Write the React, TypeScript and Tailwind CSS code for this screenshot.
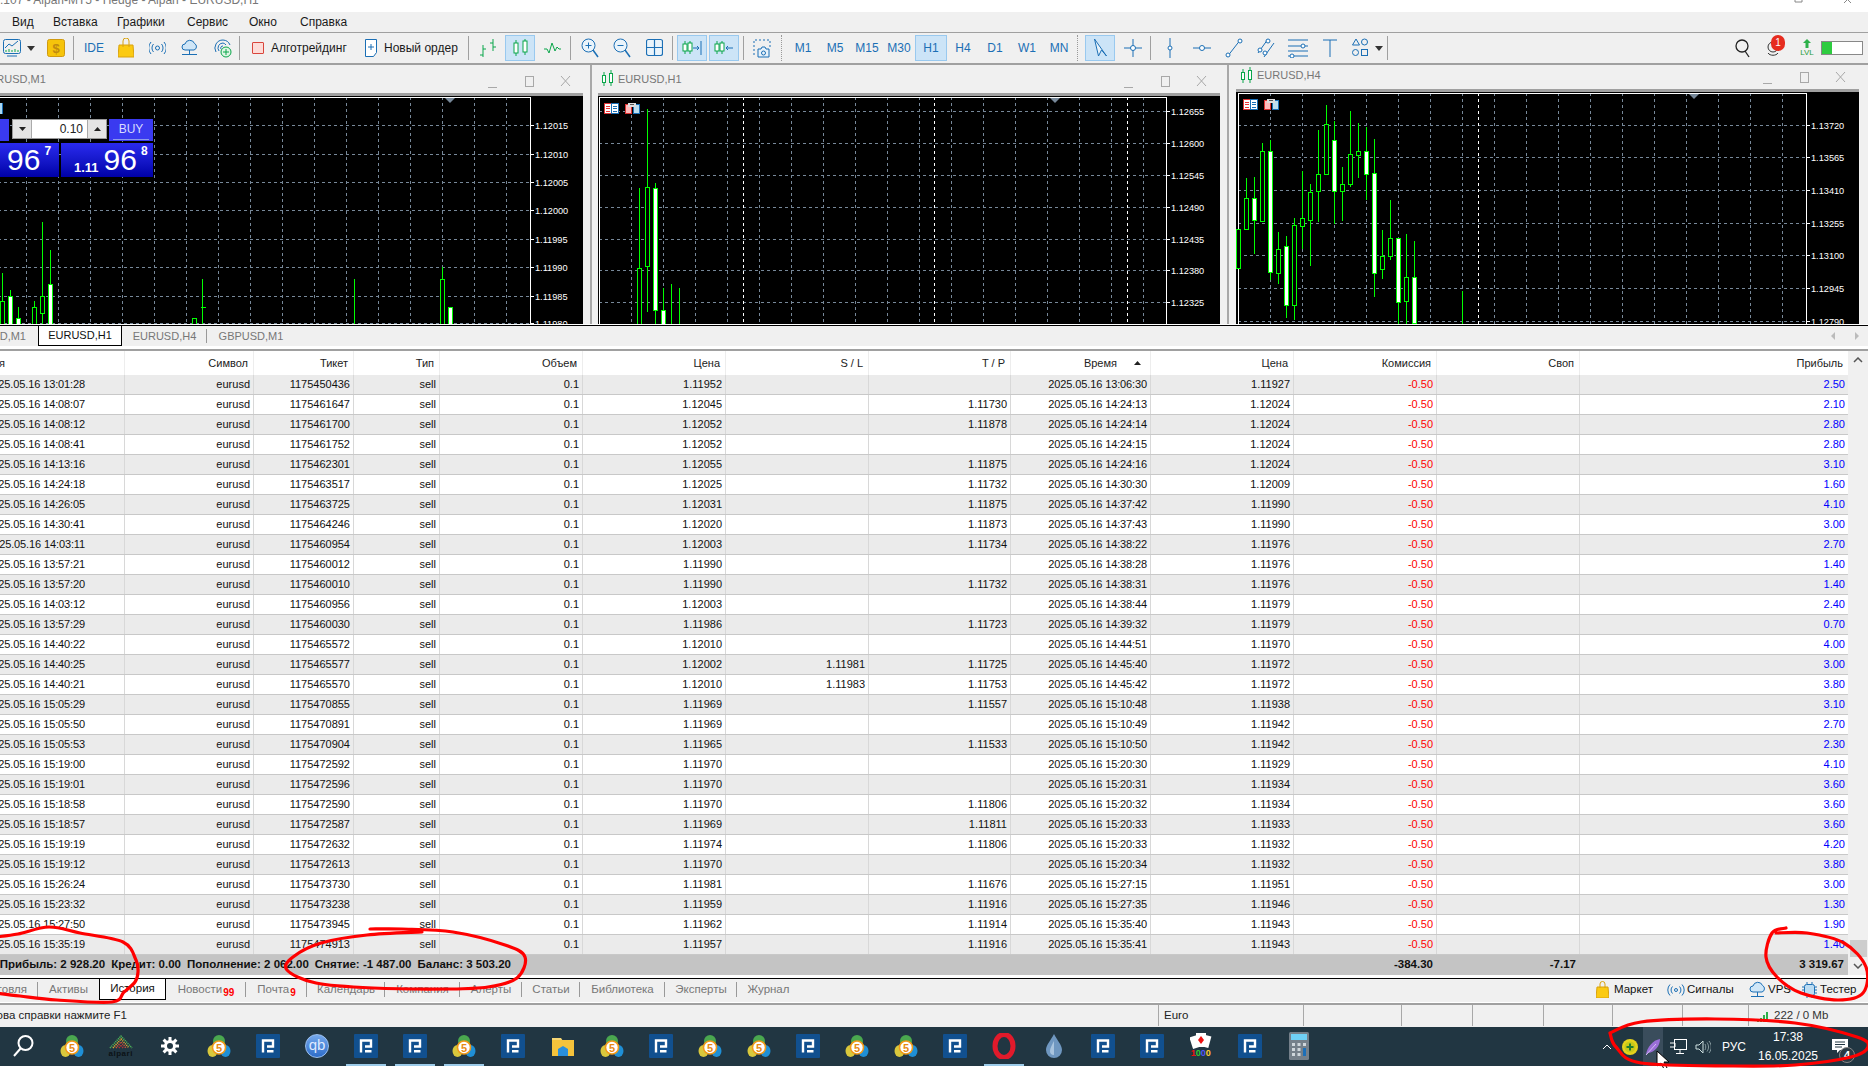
import React from "react";

const BLUE = "#1b6fb5";
const GREEN = "#0aa64a";

type Row = [string, string, string, string, string, string, string, string];
const rows: Row[] = [
  ["13:01:28","1175450436","1.11952","","","13:06:30","1.11927","2.50"],
  ["14:08:07","1175461647","1.12045","","1.11730","14:24:13","1.12024","2.10"],
  ["14:08:12","1175461700","1.12052","","1.11878","14:24:14","1.12024","2.80"],
  ["14:08:41","1175461752","1.12052","","","14:24:15","1.12024","2.80"],
  ["14:13:16","1175462301","1.12055","","1.11875","14:24:16","1.12024","3.10"],
  ["14:24:18","1175463517","1.12025","","1.11732","14:30:30","1.12009","1.60"],
  ["14:26:05","1175463725","1.12031","","1.11875","14:37:42","1.11990","4.10"],
  ["14:30:41","1175464246","1.12020","","1.11873","14:37:43","1.11990","3.00"],
  ["14:03:11","1175460954","1.12003","","1.11734","14:38:22","1.11976","2.70"],
  ["13:57:21","1175460012","1.11990","","","14:38:28","1.11976","1.40"],
  ["13:57:20","1175460010","1.11990","","1.11732","14:38:31","1.11976","1.40"],
  ["14:03:12","1175460956","1.12003","","","14:38:44","1.11979","2.40"],
  ["13:57:29","1175460030","1.11986","","1.11723","14:39:32","1.11979","0.70"],
  ["14:40:22","1175465572","1.12010","","","14:44:51","1.11970","4.00"],
  ["14:40:25","1175465577","1.12002","1.11981","1.11725","14:45:40","1.11972","3.00"],
  ["14:40:21","1175465570","1.12010","1.11983","1.11753","14:45:42","1.11972","3.80"],
  ["15:05:29","1175470855","1.11969","","1.11557","15:10:48","1.11938","3.10"],
  ["15:05:50","1175470891","1.11969","","","15:10:49","1.11942","2.70"],
  ["15:05:53","1175470904","1.11965","","1.11533","15:10:50","1.11942","2.30"],
  ["15:19:00","1175472592","1.11970","","","15:20:30","1.11929","4.10"],
  ["15:19:01","1175472596","1.11970","","","15:20:31","1.11934","3.60"],
  ["15:18:58","1175472590","1.11970","","1.11806","15:20:32","1.11934","3.60"],
  ["15:18:57","1175472587","1.11969","","1.11811","15:20:33","1.11933","3.60"],
  ["15:19:19","1175472632","1.11974","","1.11806","15:20:33","1.11932","4.20"],
  ["15:19:12","1175472613","1.11970","","","15:20:34","1.11932","3.80"],
  ["15:26:24","1175473730","1.11981","","1.11676","15:27:15","1.11951","3.00"],
  ["15:23:32","1175473238","1.11959","","1.11916","15:27:35","1.11946","1.30"],
  ["15:27:50","1175473945","1.11962","","1.11914","15:35:40","1.11943","1.90"],
  ["15:35:19","1175474913","1.11957","","1.11916","15:35:41","1.11943","1.40"],
];

const COLS = "grid grid-cols-[125px_129px_100px_86px_143px_143px_143px_142px_140px_143px_143px_143px_268px]";

// candle: [x, wickTop, wickBottom, bodyTop, bodyBottom, filled] in 3x crop coordinates
type C = [number, number, number, number?, number?, boolean?];
const c3: C[] = [
  [7,412,530,412,530,false],[31,258,412,320,412,false],[55,255,485,320,385,true],[79,153,388,178,388,false],
  [103,145,565,178,540,true],[127,420,575,472,545,false],[151,432,678,463,640,true],[175,378,684,400,640,false],
  [199,238,472,380,403,false],[223,276,522,300,383,false],[247,113,390,247,298,false],[271,40,247,97,247,false],
  [295,88,395,145,298,true],[319,225,387,277,298,false],[343,57,285,187,277,false],[367,93,258,178,190,false],
  [391,106,323,178,247,true],[415,141,614,244,544,true],[439,414,561,493,533,false],[463,324,503,439,494,false],
  [487,438,695,439,631,true],[511,427,695,556,628,false],[535,447,695,556,695,true],[679,598,695],
];
const c2: C[] = [
  [130,282,692,523,700,false],[154,45,654,280,517,false],[178,267,692,283,650,true],
  [202,583,692,650,700,true],[226,570,692],[250,582,692],
];
const c1: C[] = [
  [7,538,692,622,700,false],[31,588,692,607,700,true],[55,640,692,673,700,true],[103,622,692,640,700,false],
  [127,384,692,607,658,false],[151,468,692,572,700,true],[583,673,692,673,700,false],[607,555,692],
  [1063,555,692],[1327,520,692,556,700,false],[1351,640,692,640,700,true],
];

function Candles({ data, ox, oy }: { data: C[]; ox: number; oy: number }) {
  return (
    <g shapeRendering="crispEdges">
      {data.map(([x, a, b, t, u, f], i) => {
        const cx = Math.floor(x / 3 + ox) + 0.5;
        return (
          <g key={i}>
            <line x1={cx} x2={cx} y1={a / 3 + oy} y2={b / 3 + oy} stroke="#00ff00" />
            {t !== undefined && u !== undefined && (
              <rect x={cx - 2} y={Math.floor(t / 3 + oy) + 0.5} width={4} height={Math.round((u - t) / 3)} fill={f ? "#fff" : "#000"} stroke="#00ff00" />
            )}
            {x === 607 && <line x1={cx - 2} x2={cx + 3} y1={Math.floor(640 / 3 + oy) + 0.5} y2={Math.floor(640 / 3 + oy) + 0.5} stroke="#00ff00" />}
          </g>
        );
      })}
    </g>
  );
}

function CornerIcons({ x, y }: { x: number; y: number }) {
  return (
    <g transform={`translate(${x} ${y})`} shapeRendering="crispEdges">
      <rect x="0.5" y="0.5" width="14" height="10" fill="#fff" stroke="#d33" />
      <rect x="7.5" y="0.5" width="7" height="10" fill="#fff" stroke="#1b6fb5" />
      <path d="M2 3h4M2 5.5h4M2 8h4" stroke="#e33" />
      <path d="M9 3h4M9 5.5h4M9 8h4" stroke="#1b6fb5" />
      <rect x="21.5" y="1.5" width="6" height="9" fill="#fbb" stroke="#d33" />
      <rect x="29.5" y="1.5" width="6" height="9" fill="#bde" stroke="#1b6fb5" />
      <rect x="24" y="0" width="8" height="4" fill="#ddd" />
      <rect x="26" y="1" width="4" height="1" fill="#555" />
    </g>
  );
}

function Chart({ w, h, plotL, plotR, plotT, hs, labels, vStart, whites, data, ox, oy, mark, corner }: {
  w: number; h: number; plotL: number; plotR: number; plotT: number; hs: number[]; labels: string[]; vStart: number;
  whites: number[]; data: C[]; ox: number; oy: number; mark: number; corner?: [number, number];
}) {
  const vs: number[] = [];
  for (let x = vStart; x < plotR; x += 32) vs.push(x);
  return (
    <svg width={w} height={h} className="block">
      <rect width={w} height={h} fill="#000" />
      <g shapeRendering="crispEdges">
        {hs.map((y) => (
          <line key={y} x1={plotL} x2={plotR} y1={Math.floor(y) + 0.5} y2={Math.floor(y) + 0.5} stroke="#778899" strokeDasharray="3 3" />
        ))}
        {vs.map((x) => (
          <line key={x} x1={Math.floor(x) + 0.5} x2={Math.floor(x) + 0.5} y1={plotT} y2={h} stroke="#778899" strokeDasharray="3 3" />
        ))}
        {whites.map((x) => (
          <line key={x} x1={Math.floor(x) + 0.5} x2={Math.floor(x) + 0.5} y1={plotT} y2={h} stroke="#fff" strokeDasharray="3 3" />
        ))}
        <line x1={plotL} x2={plotR} y1={plotT + 0.5} y2={plotT + 0.5} stroke="#fff" />
        <line x1={plotL + 0.5} x2={plotL + 0.5} y1={plotT} y2={h} stroke="#fff" />
        <line x1={plotR + 0.5} x2={plotR + 0.5} y1={plotT} y2={h} stroke="#fff" />
        {hs.map((y) => (
          <line key={y} x1={plotR} x2={plotR + 4} y1={Math.floor(y) + 0.5} y2={Math.floor(y) + 0.5} stroke="#fff" />
        ))}
      </g>
      <Candles data={data} ox={ox} oy={oy} />
      <polygon points={`${mark - 5},${plotT + 1} ${mark + 5},${plotT + 1} ${mark},${plotT + 6}`} fill="#778899" />
      {corner && <CornerIcons x={corner[0]} y={corner[1]} />}
      {labels.map((l, i) => (
        <text key={l} x={plotR + 5} y={hs[i] + 3.5} fill="#fff" fontSize="9.2" fontFamily="Liberation Sans">{l}</text>
      ))}
    </svg>
  );
}

function WinCtl({ cls }: { cls: string }) {
  return (
    <svg width="83" height="16" viewBox="0 0 83 16" fill="none" stroke="#a8a8a8" className={`shrink-0 ${cls}`}>
      <path d="M0 14.5h9" />
      <rect x="37.5" y="3.5" width="8" height="10" />
      <path d="M73 3l9 10M82 3l-9 10" />
    </svg>
  );
}

function CandleMini() {
  return (
    <svg width="13" height="20" viewBox="0 0 13 20" fill="none" stroke="#0aa64a" className="shrink-0 block">
      <path d="M3 3v14M10 1v16" />
      <rect x="1.5" y="6.5" width="3" height="7" fill="#fff" />
      <rect x="8.5" y="4.5" width="3" height="9" fill="#fff" />
    </svg>
  );
}

function Sep() { return <div className="w-px h-[24px] bg-[#a0a0a0] shrink-0" />; }

function Ic({ w, h = 20, cls, vb, children }: { w: number; h?: number; cls: string; vb?: string; children: React.ReactNode }) {
  return (
    <svg width={w} height={h} viewBox={vb ?? `0 0 ${w} ${h}`} fill="none" className={`shrink-0 ${cls}`}>
      {children}
    </svg>
  );
}

function TfCell({ t, active }: { t: string; active?: boolean }) {
  return (
    <div className={`w-[32px] h-[26px] shrink-0 flex items-center justify-center text-[12px] text-[#1b6fb5] ${active ? "bg-[#cce4f7] shadow-[inset_0_0_0_1px_#99c9ef]" : ""}`}>{t}</div>
  );
}

function ToolCell({ cls, active, children }: { cls?: string; active?: boolean; children: React.ReactNode }) {
  return (
    <div className={`h-[26px] shrink-0 flex items-center justify-center ${active ? "bg-[#cce4f7] shadow-[inset_0_0_0_1px_#99c9ef]" : ""} ${cls ?? "w-[32px]"}`}>{children}</div>
  );
}

function Toolbar() {
  return (
    <div className="h-[30px] bg-[#f0f0f0] flex items-center overflow-hidden shrink-0 text-[12px] text-[#1a1a1a]">
      <Ic w={20} cls="ml-[2px]"><path d="M1.5 3.5a2 2 0 0 1 2-2h13a2 2 0 0 1 2 2v10a2 2 0 0 1-2 2h-13a2 2 0 0 1-2-2z" stroke={BLUE} /><path d="M3 10l4-4 3 2 6-5" stroke={BLUE} /><path d="M4 14v-2M7 14v-3M10 14v-2M13 14v-3M16 14v-2" stroke={GREEN} /><path d="M5 18h10" stroke={BLUE} /></Ic>
      <Ic w={8} h={5} cls="ml-[5px]"><path d="M0 0h8L4 5z" fill="#333" /></Ic>
      <Ic w={18} cls="ml-[12px]"><rect x=".5" y="1.5" width="17" height="17" rx="2" fill="#f6c40b" stroke="#d09a10" /><text x="9" y="15" textAnchor="middle" fontSize="13" fontWeight="700" fill="#c08a10">$</text></Ic>
      <div className="ml-[8px]"><Sep /></div>
      <div className="ml-[10px] w-[18px] text-[#1b6fb5] text-[12px] shrink-0">IDE</div>
      <Ic w={16} h={20} cls="ml-[16px]"><path d="M1 7h14l1 12H0z" fill="#fbca12" stroke="#d9a20e" /><path d="M5 9V3a3 3 0 0 1 6 0v6" stroke="#d9a20e" /></Ic>
      <Ic w={17} h={20} cls="ml-[15px]"><circle cx="8.5" cy="10" r="2" stroke={BLUE} /><path d="M4.5 6a6 6 0 0 0 0 8M12.5 6a6 6 0 0 1 0 8M2 4a9 9 0 0 0 0 12M15 4a9 9 0 0 1 0 12" stroke={BLUE} /></Ic>
      <Ic w={17} h={20} cls="ml-[15px]"><path d="M4 12a3 3 0 0 1 0-6 5 5 0 0 1 9.5-.5A3.5 3.5 0 0 1 13 12z" fill="#cfe6f7" stroke={BLUE} /><path d="M8.5 12v4M1 16.5h15" stroke={BLUE} /></Ic>
      <Ic w={19} h={20} cls="ml-[15px]"><path d="M10 2a8 8 0 0 0-7 12M10 5a5 5 0 0 0-4 8M10 8a2 2 0 0 0-2 3M10 2a8 8 0 0 1 7 5M10 5a5 5 0 0 1 3 2" stroke={BLUE} /><circle cx="13" cy="14" r="5" fill="#dff5e4" stroke={GREEN} /><path d="M13 11v6M10 14h6" stroke={GREEN} /></Ic>
      <div className="ml-[7px]"><Sep /></div>
      <div className="ml-[12px] w-[12px] h-[12px] shrink-0 border border-[#d9453c] bg-[#fddcd8] rounded-[1px]" />
      <div className="ml-[7px] w-[77px] shrink-0 whitespace-nowrap">Алготрейдинг</div>
      <Ic w={14} h={20} cls="ml-[16px]"><path d="M1.5 1.5h11v13l-3 4h-8z" fill="#fff" stroke={BLUE} /><path d="M7 6v6M4 9h6" stroke={BLUE} /></Ic>
      <div className="ml-[6px] w-[74px] shrink-0 whitespace-nowrap">Новый ордер</div>
      <div className="ml-[10px]"><Sep /></div>
      <Ic w={19} cls="ml-[10px]"><path d="M4 7v12M1 17h3M4 11h3M14 1v12M11 5h3M14 9h3" stroke={GREEN} /></Ic>
      <ToolCell cls="ml-[7px] w-[30px]" active><Ic w={15} cls=""><path d="M3 2v16M12 1v16" stroke={GREEN} /><rect x="1" y="5" width="4" height="10" fill="#fff" stroke={GREEN} /><rect x="10" y="3" width="4" height="11" fill="#fff" stroke={GREEN} /></Ic></ToolCell>
      <Ic w={17} cls="ml-[9px]"><path d="M0 11h3l2 4 3-10 3 8 2-4 2 2h2" stroke={GREEN} /></Ic>
      <div className="ml-[9px]"><Sep /></div>
      <Ic w={18} cls="ml-[10px]"><circle cx="7.5" cy="7.5" r="6.5" fill="#eaf4fb" stroke={BLUE} /><path d="M12 12l5 7" stroke={BLUE} strokeWidth="1.5" /><path d="M4.5 7.5h6M7.5 4.5v6" stroke={BLUE} /></Ic>
      <Ic w={18} cls="ml-[14px]"><circle cx="7.5" cy="7.5" r="6.5" fill="#eaf4fb" stroke={BLUE} /><path d="M12 12l5 7" stroke={BLUE} strokeWidth="1.5" /><path d="M4.5 7.5h6" stroke={BLUE} /></Ic>
      <Ic w={17} cls="ml-[15px]"><rect x=".5" y="1.5" width="16" height="16" rx="2" fill="#eaf4fb" stroke={BLUE} strokeWidth="1.2" /><path d="M8.5 1.5v16M.5 9.5h16" stroke={BLUE} strokeWidth="1.2" /></Ic>
      <div className="ml-[9px]"><Sep /></div>
      <ToolCell cls="ml-[4px] w-[30px]" active><Ic w={20} cls=""><path d="M3 3v13M8 3v13" stroke={GREEN} /><rect x="1" y="6" width="4" height="7" fill="#fff" stroke={GREEN} /><rect x="6" y="5" width="4" height="8" fill="#fff" stroke={GREEN} /><path d="M11 10h6M15 8l2 2-2 2M19 3v14" stroke={BLUE} /></Ic></ToolCell>
      <ToolCell cls="ml-[2px] w-[30px]" active><Ic w={20} cls=""><path d="M3 3v13M8 3v13" stroke={GREEN} /><rect x="1" y="6" width="4" height="7" fill="#fff" stroke={GREEN} /><rect x="6" y="5" width="4" height="8" fill="#fff" stroke={GREEN} /><path d="M12 10h7M14 8l-2 2 2 2" stroke={BLUE} /></Ic></ToolCell>
      <div className="ml-[4px]"><Sep /></div>
      <Ic w={20} cls="ml-[8px]"><path d="M2 17V2h16v7" stroke={BLUE} strokeDasharray="2 2" /><path d="M6 19v-8h3l1-2h3l1 2h3v8z" fill="#e8f2fa" stroke={BLUE} /><circle cx="11.5" cy="15" r="2" stroke={BLUE} /></Ic>
      <div className="ml-[9px] w-[2px] h-[26px] border-l border-dotted border-[#999] shrink-0" />
      <div className="ml-[4px] flex shrink-0">
        {["M1","M5","M15","M30"].map((t) => <TfCell key={t} t={t} />)}
        <TfCell t="H1" active />
        {["H4","D1","W1","MN"].map((t) => <TfCell key={t} t={t} />)}
      </div>
      <div className="ml-[2px] w-[2px] h-[26px] border-l border-dotted border-[#999] shrink-0" />
      <ToolCell cls="ml-[6px] w-[30px]" active><Ic w={14} cls=""><path d="M1.5 1l4 17 3-6 5 6z" fill="#eaf4fb" stroke={BLUE} /></Ic></ToolCell>
      <ToolCell cls="ml-[2px] w-[32px]"><Ic w={18} cls=""><path d="M9 1v18M0 10h18" stroke={BLUE} /><circle cx="9" cy="10" r="2.5" fill="#fff" stroke={BLUE} /></Ic></ToolCell>
      <div className="ml-px"><Sep /></div>
      <ToolCell cls="ml-[3px] w-[32px]"><Ic w={6} cls=""><path d="M3 0v20" stroke={BLUE} /><circle cx="3" cy="10" r="2" fill="#fff" stroke={BLUE} /></Ic></ToolCell>
      <ToolCell><Ic w={18} cls=""><path d="M0 10h18" stroke={BLUE} /><circle cx="9" cy="10" r="2.5" fill="#fff" stroke={BLUE} /></Ic></ToolCell>
      <ToolCell><Ic w={18} cls=""><path d="M2 19L16 1" stroke={BLUE} /><circle cx="3" cy="17" r="2" fill="#fff" stroke={BLUE} /><circle cx="15" cy="3" r="2" fill="#fff" stroke={BLUE} /></Ic></ToolCell>
      <ToolCell><Ic w={18} cls=""><path d="M1 15L11 1M7 19L17 5" stroke={BLUE} /><circle cx="3" cy="12" r="2" fill="#fff" stroke={BLUE} /><circle cx="11" cy="3" r="2" fill="#fff" stroke={BLUE} /><circle cx="8" cy="15" r="2" fill="#fff" stroke={BLUE} /></Ic></ToolCell>
      <ToolCell><Ic w={20} cls=""><path d="M0 2h20M0 8h20M0 13h20M0 18h20" stroke={BLUE} /><circle cx="15" cy="8" r="2" fill="#fff" stroke={BLUE} /><circle cx="4" cy="18" r="2" fill="#fff" stroke={BLUE} /></Ic></ToolCell>
      <ToolCell><Ic w={14} cls=""><path d="M0 2h14M7 2v17" stroke={BLUE} /></Ic></ToolCell>
      <ToolCell cls="w-[28px]"><Ic w={18} cls=""><path d="M5 1l3.5 6h-7z" stroke={BLUE} /><circle cx="13.5" cy="4" r="3" stroke={BLUE} /><circle cx="4.5" cy="14.5" r="3" stroke={BLUE} /><rect x="10.5" y="11.5" width="6" height="6" stroke={BLUE} /></Ic></ToolCell>
      <Ic w={8} h={5} cls="ml-[1px]"><path d="M0 0h8L4 5z" fill="#333" /></Ic>
      <div className="ml-[4px]"><Sep /></div>
      <div className="flex-1" />
      <Ic w={16} h={20} cls="mr-[14px]"><circle cx="7" cy="8" r="6" stroke="#222" strokeWidth="1.3" /><path d="M10 13l4 6" stroke="#222" strokeWidth="1.3" /></Ic>
      <div className="relative w-[22px] h-[26px] mr-[13px] shrink-0">
        <svg width="16" height="20" viewBox="0 0 16 20" fill="none" className="absolute left-0 top-[4px]"><circle cx="8" cy="8" r="5" stroke="#333" /><path d="M3 14c2 3 8 3 10 0" stroke="#333" /></svg>
        <div className="absolute left-[6px] top-0 w-[14px] h-[16px] rounded-full bg-[#e62c1f] text-white text-[10px] leading-[16px] text-center">1</div>
      </div>
      <div className="flex flex-col items-center w-[14px] mr-[7px] shrink-0">
        <svg width="8" height="9" viewBox="0 0 8 9"><path d="M4 0l4 4H5.5v5h-3V4H0z" fill="#2db04a" /></svg>
        <span className="text-[8px] leading-[9px] text-[#2a9d3c]">LVL</span>
      </div>
      <div className="w-[42px] h-[14px] border border-[#888] bg-white mr-[5px] shrink-0 flex">
        <div className="w-[10px] bg-[#2ecc40]" />
      </div>
    </div>
  );
}

function TradePanel() {
  return (
    <>
      <div className="absolute left-0 top-[7px] w-[3px] h-[11px] bg-[#a9d6f2] border-r border-[#1b6fb5]" />
      <div className="absolute left-0 top-[23px] w-[9px] h-[22px] bg-[#3a3af0]" />
      <div className="absolute left-[12px] top-[23px] w-[95px] h-[20px] border border-[#999] bg-[#e4e4e4] flex">
        <div className="w-[19px] flex items-center justify-center border-r border-[#aaa]"><svg width="7" height="4"><path d="M0 0h7L3.5 4z" fill="#222" /></svg></div>
        <div className="flex-1 bg-white text-right pr-[4px] text-[12px] leading-[18px] text-[#222]">0.10</div>
        <div className="w-[19px] flex items-center justify-center border-l border-[#aaa]"><svg width="7" height="4"><path d="M0 4h7L3.5 0z" fill="#222" /></svg></div>
      </div>
      <div className="absolute left-[109px] top-[23px] w-[44px] h-[22px] bg-[#3a3af0] px-[4px] text-center">
        <div className="text-[12px] leading-[20px] text-[#d8dcff] border-b border-[#8d9bea] h-[21px]">BUY</div>
      </div>
      <div className="absolute left-0 top-[47px] w-[59px] h-[34px] bg-gradient-to-b from-[#2a2aef] to-[#0000a8] text-white flex items-start">
        <span className="ml-[7px] mt-[1px] text-[30px] leading-[32px]">96</span>
        <span className="ml-[4px] mt-[1px] text-[12px] leading-[14px] font-bold">7</span>
      </div>
      <div className="absolute left-[61px] top-[47px] w-[92px] h-[34px] bg-gradient-to-b from-[#2a2aef] to-[#0000a8] text-white flex items-start">
        <span className="ml-[13px] mt-[17px] text-[13px] leading-[15px] font-bold">1.11</span>
        <span className="ml-[5px] mt-[1px] text-[30px] leading-[32px]">96</span>
        <span className="ml-[4px] mt-[1px] text-[12px] leading-[14px] font-bold">8</span>
      </div>
    </>
  );
}

function Charts() {
  const frameLine = "h-[3px] bg-[#a0a0a0] shrink-0";
  return (
    <div className="h-[259px] flex bg-[#f0f0f0] shrink-0 overflow-hidden text-[11px] text-[#777]">
      <div className="w-[583px] shrink-0 flex flex-col">
        <div className="h-[28px] shrink-0 flex items-center">
          <span className="ml-[-19px] whitespace-nowrap">EURUSD,M1</span>
          <div className="flex-1" />
          <WinCtl cls="mr-[12px] mt-[3px]" />
        </div>
        <div className={frameLine} />
        <div className="relative h-[228px] overflow-hidden">
          <Chart w={583} h={228} plotL={-2} plotR={530} plotT={1} hs={[29.3,58.3,86.3,114.7,143.3,171.3,200,227]} labels={["1.12015","1.12010","1.12005","1.12000","1.11995","1.11990","1.11985","1.11980"]} vStart={26.3} whites={[]} data={c1} ox={0} oy={-2} mark={450} />
          <TradePanel />
        </div>
      </div>
      <div className="w-[7px] shrink-0" />
      <div className="w-[630px] shrink-0 flex flex-col border-l-2 border-[#a8a8a8]">
        <div className="h-[28px] shrink-0 flex items-center">
          <span className="ml-[9px]"><CandleMini /></span>
          <span className="ml-[4px] whitespace-nowrap">EURUSD,H1</span>
          <div className="flex-1" />
          <WinCtl cls="mr-[13px] mt-[3px]" />
        </div>
        <div className="h-[3px] bg-[#a0a0a0] ml-[6px] shrink-0" />
        <div className="ml-[6px] h-[228px] overflow-hidden">
          <Chart w={622} h={228} plotL={1} plotR={568} plotT={1} hs={[15.3,47.3,79.3,111.3,143.3,174.3,206.3]} labels={["1.12655","1.12600","1.12545","1.12490","1.12435","1.12380","1.12325"]} vStart={33.3} whites={[145.3,336.7,529.7]} data={c2} ox={-2} oy={-2} mark={457} corner={[6,7]} />
        </div>
      </div>
      <div className="w-[7px] shrink-0" />
      <div className="flex-1 flex flex-col border-l-2 border-[#a8a8a8]">
        <div className="h-[24px] shrink-0 flex items-center">
          <span className="ml-[11px] mb-[3px]"><CandleMini /></span>
          <span className="ml-[4px] mb-[4px] whitespace-nowrap">EURUSD,H4</span>
          <div className="flex-1" />
          <WinCtl cls="mr-[22px]" />
        </div>
        <div className="h-[3px] bg-[#a0a0a0] ml-[7px] mr-[9px] shrink-0" />
        <div className="ml-[7px] mr-[9px] h-[232px] overflow-hidden">
          <Chart w={623} h={232} plotL={2} plotR={570} plotT={1} hs={[33.3,65.3,98.3,131.3,163.3,196.3,229.3]} labels={["1.13720","1.13565","1.13410","1.13255","1.13100","1.12945","1.12790"]} vStart={34.3} whites={[242.3]} data={c3} ox={0} oy={0} mark={458} corner={[7,7]} />
        </div>
      </div>
    </div>
  );
}

function TopTabs() {
  const inactive = "h-[20px] flex items-center justify-center text-[#777] shrink-0";
  return (
    <div className="shrink-0 text-[11px]">
      <div className="h-px bg-white" />
      <div className="h-px bg-black" />
      <div className="h-[20px] bg-[#f0f0f0] flex items-start">
        <div className="w-[38px] h-[20px] flex items-center justify-end text-[#777] pr-[12px] whitespace-nowrap shrink-0">EURUSD,M1</div>
        <div className="w-[84px] h-[20px] bg-white border-x border-b border-black text-[#111] flex items-center justify-center shrink-0">EURUSD,H1</div>
        <div className={`${inactive} w-[85px] relative after:content-[''] after:absolute after:right-0 after:top-[3px] after:h-[14px] after:w-px after:bg-[#999]`}>EURUSD,H4</div>
        <div className={`${inactive} w-[88px]`}>GBPUSD,M1</div>
        <div className="flex-1" />
        <svg width="30" height="20" viewBox="0 0 30 20" className="mr-[8px] shrink-0"><path d="M5 6l-4 4 4 4zM25 6l4 4-4 4z" fill="#bbb" /></svg>
      </div>
      <div className="h-[3px] bg-white" />
      <div className="h-[2px] bg-[#a0a0a0]" />
    </div>
  );
}

function Cell({ children, cls }: { children?: React.ReactNode; cls?: string }) {
  return <div className={`flex items-center justify-end whitespace-nowrap pr-[3px] border-r border-[#d8d8d8] ${cls ?? ""}`}>{children}</div>;
}

function HCell({ children, cls }: { children?: React.ReactNode; cls?: string }) {
  return <div className={`flex items-center justify-end whitespace-nowrap pr-[5px] border-r border-[#ededed] ${cls ?? ""}`}>{children}</div>;
}

function Table() {
  return (
    <div className="flex shrink-0 text-[11px] text-[#111]">
      <div className="w-[1848px] shrink-0">
        <div className={`${COLS} h-[24px] bg-white text-[#222]`}>
          <HCell cls="pr-[119px]">Время</HCell>
          <HCell>Символ</HCell>
          <HCell>Тикет</HCell>
          <HCell>Тип</HCell>
          <HCell>Объем</HCell>
          <HCell>Цена</HCell>
          <HCell>S / L</HCell>
          <HCell>T / P</HCell>
          <HCell cls="pr-[9px]">
            <span>Время</span>
            <svg width="7" height="4" className="ml-[17px]"><path d="M0 4h7L3.5 0z" fill="#222" /></svg>
          </HCell>
          <HCell>Цена</HCell>
          <HCell>Комиссия</HCell>
          <HCell>Своп</HCell>
          <HCell cls="border-r-0">Прибыль</HCell>
        </div>
        {rows.map((r, i) => (
          <div key={r[1]} className={`${COLS} h-[20px] border-b border-[#c8c8c8] ${i % 2 === 0 ? "bg-[#ebebeb]" : "bg-white"}`}>
            <Cell cls="pr-[39px] tracking-[-0.12px]">2025.05.16 {r[0]}</Cell>
            <Cell>eurusd</Cell>
            <Cell>{r[1]}</Cell>
            <Cell>sell</Cell>
            <Cell>0.1</Cell>
            <Cell>{r[2]}</Cell>
            <Cell>{r[3]}</Cell>
            <Cell>{r[4]}</Cell>
            <Cell cls="tracking-[-0.12px]">2025.05.16 {r[5]}</Cell>
            <Cell>{r[6]}</Cell>
            <Cell cls="text-[#ff0000]">-0.50</Cell>
            <Cell />
            <Cell cls="text-[#0000ff] border-r-0">{r[7]}</Cell>
          </div>
        ))}
        <div className="h-[20px] bg-[#c4c4c4] flex font-bold text-[#111] text-[11.5px]">
          <div className="w-[511px] flex items-center justify-end gap-[6px] whitespace-nowrap shrink-0">
            <span>Прибыль: 2 928.20</span>
            <span>Кредит: 0.00</span>
            <span>Пополнение: 2 062.00</span>
            <span>Снятие: -1 487.00</span>
            <span>Баланс: 3 503.20</span>
          </div>
          <div className="w-[922px] flex items-center justify-end shrink-0">-384.30</div>
          <div className="w-[143px] flex items-center justify-end shrink-0">-7.17</div>
          <div className="w-[268px] flex items-center justify-end shrink-0">3 319.67</div>
        </div>
      </div>
      <div className="w-[20px] bg-[#f0f0f0] flex flex-col items-center">
        <svg width="10" height="6" viewBox="0 0 10 6" fill="none" stroke="#555" strokeWidth="1.5" className="mt-[6px]"><path d="M1 5l4-4 4 4" /></svg>
        <div className="flex-1" />
        <div className="w-[17px] h-[17px] bg-[#cdcdcd]" />
        <svg width="10" height="6" viewBox="0 0 10 6" fill="none" stroke="#555" strokeWidth="1.5" className="my-[6px]"><path d="M1 1l4 4 4-4" /></svg>
      </div>
    </div>
  );
}

function BTab({ w, children }: { w: string; children: React.ReactNode }) {
  return (
    <div className={`${w} shrink-0 h-[21px] flex items-center justify-center text-[#777] relative after:content-[''] after:absolute after:right-0 after:top-[3px] after:h-[15px] after:w-px after:bg-[#999]`}>{children}</div>
  );
}

function BottomTabs() {
  const badge = "text-[#ff0000] text-[10px] font-bold mt-[7px] leading-[10px] ml-px";
  return (
    <div className="shrink-0 text-[11.5px]">
      <div className="h-[3px] bg-white" />
      <div className="h-px bg-black" />
      <div className="h-[23px] bg-[#f0f0f0] flex items-start">
        <div className="w-[38px] h-[21px] shrink-0 flex items-center justify-end pr-[11px] text-[#777] whitespace-nowrap relative after:content-[''] after:absolute after:right-0 after:top-[3px] after:h-[15px] after:w-px after:bg-[#999]">Торговля</div>
        <div className="w-[61px] h-[21px] shrink-0 flex items-center justify-center text-[#777]">Активы</div>
        <div className="w-[67px] h-[21px] shrink-0 bg-white border-x border-b border-black flex items-center justify-center text-[#111]">История</div>
        <BTab w="w-[80px]"><span>Новости</span><span className={badge}>99</span></BTab>
        <BTab w="w-[61px]"><span>Почта</span><span className={badge}>9</span></BTab>
        <BTab w="w-[78px]">Календарь</BTab>
        <BTab w="w-[75px]">Компания</BTab>
        <BTab w="w-[62px]">Алерты</BTab>
        <BTab w="w-[58px]">Статьи</BTab>
        <BTab w="w-[85px]">Библиотека</BTab>
        <BTab w="w-[72px]">Эксперты</BTab>
        <div className="w-[63px] h-[21px] shrink-0 flex items-center justify-center text-[#777]">Журнал</div>
        <div className="flex-1" />
        <div className="h-[21px] flex items-center text-[#111] pr-[11px] shrink-0">
          <svg width="13" height="17" viewBox="0 0 13 17" fill="none"><path d="M1 6h11l1 11H0z" fill="#fbca12" stroke="#d9a20e" /><path d="M4 7V3a2.5 2.5 0 0 1 5 0v4" stroke="#d9a20e" /></svg>
          <span className="ml-[5px] w-[42px] whitespace-nowrap">Маркет</span>
          <svg width="18" height="16" viewBox="0 0 18 16" fill="none" className="ml-[11px]" stroke={BLUE}><circle cx="9" cy="8" r="1.5" /><path d="M5.5 4.5a5 5 0 0 0 0 7M12.5 4.5a5 5 0 0 1 0 7M3 2.5a8 8 0 0 0 0 11M15 2.5a8 8 0 0 1 0 11" /></svg>
          <span className="ml-[2px] w-[50px] whitespace-nowrap">Сигналы</span>
          <svg width="17" height="18" viewBox="0 0 17 18" fill="none" className="ml-[12px]" stroke={BLUE}><path d="M4 11a3 3 0 0 1 0-6 5 5 0 0 1 9.5-.5A3.5 3.5 0 0 1 13 11z" fill="#cfe6f7" /><path d="M8.5 11v4M2 15.5h13" /></svg>
          <span className="ml-[2px] w-[21px] whitespace-nowrap">VPS</span>
          <svg width="15" height="18" viewBox="0 0 15 18" fill="none" className="ml-[13px]" stroke={BLUE}><rect x="2.5" y="3.5" width="10" height="11" rx="2" fill="#bcdcf2" /><path d="M0 6h2M0 9h2M0 12h2M13 6h2M13 9h2M13 12h2M5 1v2M10 1v2M5 15v2M10 15v2" /></svg>
          <span className="ml-[3px] w-[37px] whitespace-nowrap">Тестер</span>
        </div>
      </div>
      <div className="h-[1px] bg-white" />
      <div className="h-[2px] bg-[#a0a0a0]" />
    </div>
  );
}

function StatusBar() {
  const cell = "h-[21px] border-r border-[#a8a8a8] shrink-0 flex items-center";
  return (
    <div className="h-[22px] bg-[#f0f0f0] flex text-[11.5px] text-[#222] shrink-0 overflow-hidden">
      <div className={`${cell} w-[1159px]`}>
        <div className="w-[127px] flex justify-end whitespace-nowrap">Для вызова справки нажмите F1</div>
      </div>
      <div className={`${cell} w-[145px] pl-[5px]`}>Euro</div>
      <div className={`${cell} w-[98px]`} />
      <div className={`${cell} w-[71px]`} />
      <div className={`${cell} w-[71px]`} />
      <div className={`${cell} w-[69px]`} />
      <div className={`${cell} w-[70px]`} />
      <div className={`${cell} w-[66px]`} />
      <div className="h-[21px] flex items-center pl-[8px]">
        <svg width="16" height="14" viewBox="0 0 16 14"><path d="M1 13v-2M4 13V9M7 13V6M10 13V3" stroke="#2db04a" strokeWidth="2" /></svg>
        <span className="ml-[1px] text-[#333]">222 / 0 Mb</span>
      </div>
    </div>
  );
}

/* --- taskbar pictures --- */
function Mt5() {
  return (
    <svg width="24" height="24" viewBox="0 0 24 24">
      <ellipse cx="12" cy="7" rx="6" ry="6" fill="#4aa84f" />
      <ellipse cx="5.5" cy="17" rx="5" ry="6" fill="#d9c83c" />
      <ellipse cx="18.5" cy="17" rx="5" ry="6" fill="#1f8fd6" />
      <circle cx="12" cy="13.5" r="6.5" fill="#fff" stroke="#f09a1a" strokeWidth="1.6" />
      <text x="12" y="17.5" textAnchor="middle" fontSize="11" fontWeight="700" fill="#e88a12" fontFamily="Liberation Sans">5</text>
    </svg>
  );
}
function RLogo() {
  return (
    <svg width="24" height="24" viewBox="0 0 24 24" fill="none">
      <rect width="24" height="24" rx="1" fill="#11508f" />
      <path d="M7 18.5V6.5H17V12.5H11M11 17.3H17.5" stroke="#fff" strokeWidth="2.4" />
    </svg>
  );
}

const CELLS: { k: string; u?: boolean }[] = [
  { k: "search" }, { k: "mt" }, { k: "alpari" }, { k: "gear" }, { k: "mt" }, { k: "r" }, { k: "qb" },
  { k: "r", u: true }, { k: "r", u: true }, { k: "mt", u: true }, { k: "r" }, { k: "folder" }, { k: "mt" }, { k: "r" },
  { k: "mt" }, { k: "mt" }, { k: "r" }, { k: "mt" }, { k: "mt" }, { k: "r" }, { k: "opera", u: true }, { k: "drop" },
  { k: "r" }, { k: "r" }, { k: "cards" }, { k: "r" }, { k: "calc" },
];

function TaskIcon({ k }: { k: string }) {
  switch (k) {
    case "mt": return <Mt5 />;
    case "r": return <RLogo />;
    case "search":
      return <svg width="24" height="24" viewBox="0 0 24 24" fill="none" stroke="#fff" strokeWidth="2"><circle cx="14.5" cy="9" r="7" /><path d="M9.5 14.5L3 22" /></svg>;
    case "gear":
      return <svg width="20" height="20" viewBox="0 0 20 20" fill="none" stroke="#fff"><circle cx="10" cy="10" r="4.5" strokeWidth="3" /><path d="M10 1v4M10 15v4M1 10h4M15 10h4M3.6 3.6l3 3M13.4 13.4l3 3M16.4 3.6l-3 3M6.6 13.4l-3 3" strokeWidth="3" /></svg>;
    case "alpari":
      return (
        <div className="flex flex-col items-center">
          <svg width="24" height="15" viewBox="0 0 24 15" fill="none" strokeDasharray="1.2 .8" strokeWidth="1.5">
            <path d="M1 14L12 2l11 12" stroke="#4cb058" />
            <path d="M4 14L12 5l8 9" stroke="#d8ac34" />
            <path d="M7 14l5-6 5 6" stroke="#d0503a" />
            <path d="M10 14l2-3 2 3" stroke="#b03636" />
          </svg>
          <span className="text-[8px] leading-[9px] text-[#0c1216] font-bold tracking-[0.5px]">alpari</span>
        </div>
      );
    case "qb":
      return <div className="w-[24px] h-[24px] rounded-full bg-gradient-to-b from-[#74a8ec] to-[#2d6cc8] border border-[#9cc0ee] text-[#dfeaff] text-[15px] leading-[20px] text-center">qb</div>;
    case "folder":
      return <svg width="24" height="24" viewBox="0 0 24 24"><path d="M1 4h9l2 3h11v15H1z" fill="#f7d774" /><rect x="1" y="6" width="22" height="16" fill="#f5c33b" /><path d="M7 22v-7l5-3 5 3v7z" fill="#2a8fdc" /></svg>;
    case "opera":
      return <svg width="24" height="26" viewBox="0 0 24 26" fill="none"><ellipse cx="12" cy="13" rx="9" ry="11.5" stroke="#e11a2b" strokeWidth="5" /></svg>;
    case "drop":
      return <svg width="20" height="26" viewBox="0 0 20 26"><path d="M10 1c3 6 8 11 8 16a8 8 0 0 1-16 0c0-5 5-10 8-16z" fill="#6f97c0" /><path d="M10 8c-2 4-4 7-4 10a4 4 0 0 0 4 4z" fill="#a9c4de" /></svg>;
    case "cards":
      return (
        <div className="flex flex-col items-center">
          <svg width="22" height="16" viewBox="0 0 22 16"><rect x="1" y="3" width="9" height="12" fill="#fff" transform="rotate(-18 5 9)" /><rect x="11" y="2" width="9" height="12" fill="#fff" transform="rotate(15 15 8)" /><rect x="6" y="0" width="10" height="14" fill="#fff" /><path d="M11 3l3 4-3 4-3-4z" fill="#e11" /></svg>
          <span className="text-[9px] leading-[9px] font-bold text-[#e11] flex"><span>1</span><span className="text-[#3c3]">0</span><span className="text-[#55f]">0</span><span className="text-[#fc3]">0</span></span>
        </div>
      );
    case "calc":
      return <svg width="20" height="28" viewBox="0 0 20 28"><rect width="20" height="28" rx="1.5" fill="#75808a" /><rect x="2" y="2" width="16" height="6" fill="#6fd0f5" /><path d="M3 11h3v3H3zM8.5 11h3v3h-3zM14 11h3v3h-3zM3 16h3v3H3zM8.5 16h3v3h-3zM3 21h3v3H3zM8.5 21h3v3h-3z" fill="#cfd6db" /><path d="M14 16h3v8h-3z" fill="#1c6fb8" /></svg>;
    default: return null;
  }
}

function Taskbar() {
  return (
    <div className="h-[39px] bg-[#213642] flex shrink-0 relative text-white overflow-hidden">
      <div className="flex ml-[-2px] shrink-0">
        {CELLS.map((c, i) => (
          <div key={i} className="w-[49.1px] h-[39px] flex flex-col items-center shrink-0">
            <div className="flex-1 flex items-center justify-center">
              <TaskIcon k={c.k} />
            </div>
            <div className={`h-[2px] w-[40px] ${c.u ? "bg-[#9ccbe9]" : ""}`} />
          </div>
        ))}
      </div>
      <div className="flex-1" />
      <div className="flex items-center shrink-0 w-[268px] h-[39px]">
        <svg width="10" height="6" viewBox="0 0 10 6" fill="none" stroke="#fff" className="ml-[2px]"><path d="M1 5l4-4 4 4" /></svg>
        <svg width="18" height="18" viewBox="0 0 18 18" className="ml-[9px]"><circle cx="9" cy="9" r="8" fill="#e6d21c" /><circle cx="9" cy="9" r="5.5" fill="#c8c81a" /><path d="M9 5.5v7M5.5 9h7" stroke="#1f7a2f" strokeWidth="2" /></svg>
        <div className="ml-[4px] w-[20px] h-[39px] bg-[#3a4d5c] flex items-center justify-center">
          <svg width="16" height="18" viewBox="0 0 16 18"><path d="M1 17C2 9 8 2 15 1c0 7-5 13-12 14z" fill="#9a6fd8" /><path d="M1 17L11 6" stroke="#d4c0f0" /></svg>
        </div>
        <svg width="17" height="16" viewBox="0 0 17 16" fill="none" stroke="#fff" className="ml-[7px]"><rect x="4.5" y=".5" width="12" height="10" /><path d="M10 11v3M6 14.5h8M0 4h5V8H0" /></svg>
        <svg width="16" height="14" viewBox="0 0 16 14" fill="none" stroke="#cdd" className="ml-[8px]"><path d="M1 5h3l4-4v12l-4-4H1z" /><path d="M10 4c1 2 1 4 0 6M12 2.5c2 3 2 6 0 9M14 1c3 4 3 8 0 12" strokeOpacity=".6" /></svg>
        <span className="ml-[11px] text-[12px] w-[26px]">РУС</span>
        <div className="ml-[10px] w-[60px] flex flex-col items-center text-[12px] leading-[19px]">
          <span>17:38</span>
          <span>16.05.2025</span>
        </div>
        <div className="relative ml-[14px] w-[24px] h-[39px]">
          <svg width="16" height="14" viewBox="0 0 16 14" className="absolute left-0 top-[12px]"><path d="M0 0h16v11H8l-3 3v-3H0z" fill="#fff" /><path d="M3 3h10M3 5.5h10M3 8h7" stroke="#213642" /></svg>
          <div className="absolute left-[7px] top-[20px] w-[16px] h-[16px] rounded-full bg-[#2a3a44] border border-[#888] text-[11px] leading-[14px] text-center font-bold">4</div>
        </div>
      </div>
    </div>
  );
}

function smooth(p: number[][]) {
  const pts = [p[0], ...p, p[p.length - 1]];
  let d = `M${pts[1][0]} ${pts[1][1]}`;
  for (let i = 1; i < pts.length - 2; i++) {
    const [a, b, c, e] = [pts[i - 1], pts[i], pts[i + 1], pts[i + 2]];
    d += `C${b[0] + (c[0] - a[0]) / 6} ${b[1] + (c[1] - a[1]) / 6} ${c[0] - (e[0] - b[0]) / 6} ${c[1] - (e[1] - b[1]) / 6} ${c[0]} ${c[1]}`;
  }
  return d;
}

const loops = [
  [[-4,937],[18,934],[49,927],[80,933],[123,942],[136,960],[138,972],[135,982],[124,992],[112,1002],[57,1000],[20,996],[-4,993]],
  [[422,932],[367,935],[321,943],[293,957],[287,970],[316,983],[373,988],[448,989],[488,987],[517,978],[525,957],[505,945],[453,932],[402,929],[370,929]],
  [[1786,928],[1772,933],[1766,957],[1777,977],[1801,993],[1838,1000],[1863,993],[1866,967],[1844,943],[1807,933],[1776,933]],
  [[1610,1033],[1641,1022],[1715,1019],[1795,1023],[1857,1037],[1868,1047],[1851,1057],[1795,1065],[1733,1066],[1641,1063],[1616,1047],[1610,1033]],
];

export default function App() {
  return (
    <div className="relative w-[1868px] h-[1068px] overflow-hidden flex flex-col bg-white font-['Liberation_Sans',Arial,sans-serif]">
      <div className="h-[12px] bg-white shrink-0 overflow-hidden flex items-start justify-between">
        <span className="text-[12px] leading-[15px] text-[#777] whitespace-nowrap mt-[-7px]">:107 - Alpari-MT5 - Hedge - Alpari - EURUSD,H1</span>
        <svg width="60" height="8" viewBox="0 0 60 8" fill="none" stroke="#888" className="mr-[14px] mt-[-4px]"><path d="M1 0v6h7V0M50 0l7 7M57 0l-7 7" /></svg>
      </div>
      <div className="h-[20px] bg-[#f0f0f0] flex items-center text-[12px] text-[#1a1a1a] shrink-0">
        <span className="ml-[12px] w-[41px]">Вид</span>
        <span className="w-[64px]">Вставка</span>
        <span className="w-[70px]">Графики</span>
        <span className="w-[62px]">Сервис</span>
        <span className="w-[51px]">Окно</span>
        <span>Справка</span>
      </div>
      <div className="h-px bg-[#a0a0a0] shrink-0" />
      <Toolbar />
      <div className="h-[2px] bg-[#a0a0a0] shrink-0" />
      <Charts />
      <TopTabs />
      <Table />
      <BottomTabs />
      <StatusBar />
      <Taskbar />
      <svg width="14" height="18" viewBox="0 0 14 18" className="absolute left-[1656px] top-[1051px]"><path d="M1 0v15l4-3 3 6 3-1-3-6h5z" fill="#fff" stroke="#000" /></svg>
      <svg width="1868" height="1068" viewBox="0 0 1868 1068" fill="none" className="absolute left-0 top-0 pointer-events-none">
        {loops.map((l, i) => <path key={i} d={smooth(l)} stroke="#ff0000" strokeWidth="3.2" strokeLinecap="round" strokeLinejoin="round" />)}
      </svg>
    </div>
  );
}
